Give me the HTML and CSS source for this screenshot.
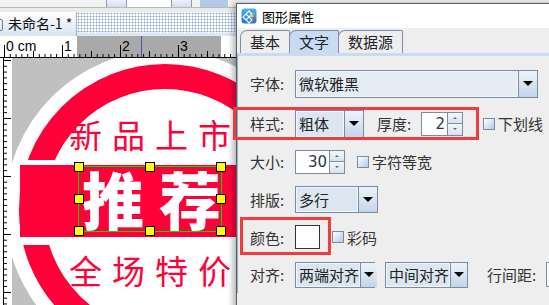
FILE: index.html
```html
<!DOCTYPE html>
<html>
<head>
<meta charset="utf-8">
<link rel="stylesheet" href="styles.css">
</head>
<body>
<div class="app">
  <div class="toolbar">
    <div class="tb-blank"></div>
    <div class="tb-btn"></div>
    <div class="tb-field"></div>
    <div class="tb-btn"></div>
    <div class="tb-gap"></div>
    <div class="tb-blue"></div>
  </div>
  <div class="topgap"></div>
  <div class="doctabs">
    <div class="doctab"><span class="doctab-icon"></span>未命名-1 *</div>
    <div class="dots"></div>
  </div>
  <div class="hruler">
    <span class="rl" style="left:6px">0 cm</span>
    <span class="rl" style="left:64px">1</span>
    <span class="rl" style="left:122px">2</span>
    <span class="rl" style="left:180px">3</span>
  </div>
  <div class="work">
    <div class="vruler"></div>
    <div class="canvas">
      <div class="disc"><div class="ring"></div></div>
      <div class="band"></div>
      <div class="t1">新品上市</div>
      <div class="t2">推荐</div>
      <div class="t3">全场特价</div>
      <div class="sel">
        <i class="h tl"></i><i class="h tc"></i><i class="h tr"></i>
        <i class="h ml"></i><i class="h mr"></i>
        <i class="h bl"></i><i class="h bc"></i><i class="h br"></i>
      </div>
    </div>
  </div>
</div>

<div class="dialog">
  <div class="titlebar">
    <svg class="appicon" width="16" height="16" viewBox="0 0 16 16">
      <defs>
        <linearGradient id="ig" x1="0" y1="0" x2="0" y2="1">
          <stop offset="0" stop-color="#4fb0f5"/>
          <stop offset="1" stop-color="#1f74d6"/>
        </linearGradient>
      </defs>
      <rect x="0.5" y="0.5" width="15" height="15" rx="3" fill="url(#ig)"/>
      <path d="M8 3 L11 6 L8 9 L5 6 Z M5 6 L8 9 L5 12 L2 9 Z M8 9 L11 12 L8 15 L5 12 Z" fill="none" stroke="#fff" stroke-width="1.1"/>
      <path d="M11 6 L13 8 L11 10 L9 8 Z" fill="#f3c233"/>
      <rect x="11.5" y="9.5" width="2.5" height="2.5" fill="#e04b3a"/>
      <rect x="12" y="5" width="2" height="2" fill="#5fc24a"/>
    </svg>
    <span class="title">图形属性</span>
  </div>
  <div class="tabs">
    <div class="tab">基本</div>
    <div class="tab on">文字</div>
    <div class="tab">数据源</div>
  </div>
  <div class="panel">
    <div class="form">
      <div class="row">
        <span class="lbl">字体:</span>
        <div class="combo w-font"><span class="f plain">微软雅黑</span><span class="b"></span></div>
      </div>
      <div class="row">
        <span class="lbl">样式:</span>
        <div class="combo w-style"><span class="f">粗体</span><span class="b"></span></div>
        <span class="lbl lbl-thick">厚度:</span>
        <div class="spin w-thick"><span class="v">2</span><span class="arrows"><i class="up"></i><i class="dn"></i></span></div>
        <span class="cb cb-under"></span><span class="cbl">下划线</span>
      </div>
      <div class="row">
        <span class="lbl">大小:</span>
        <div class="spin w-size"><span class="v">30</span><span class="arrows"><i class="up"></i><i class="dn"></i></span></div>
        <span class="cb cb-mono"></span><span class="cbl">字符等宽</span>
      </div>
      <div class="row">
        <span class="lbl">排版:</span>
        <div class="combo w-layout"><span class="f">多行</span><span class="b"></span></div>
      </div>
      <div class="row">
        <span class="lbl">颜色:</span>
        <span class="swatch"></span>
        <span class="cb cb-color"></span><span class="cbl">彩码</span>
      </div>
      <div class="row">
        <span class="lbl">对齐:</span>
        <div class="combo w-al1"><span class="f">两端对齐</span><span class="b"></span></div>
        <div class="combo w-al2"><span class="f">中间对齐</span><span class="b"></span></div>
        <span class="lbl lbl-line">行间距:</span>
        <span class="stub"></span>
      </div>
    </div>
  </div>
</div>

<div class="hl hl1"></div>
<div class="hl hl2"></div>
</body>
</html>
```

FILE: styles.css
```css
html, body {
  margin: 0;
  padding: 0;
}
body {
  width: 549px;
  height: 305px;
  overflow: hidden;
  position: relative;
  background: #eeeeee;
  font-family: "Noto Sans CJK SC", "Liberation Sans", sans-serif;
}

/* ---------- main window ---------- */
.app {
  display: flex;
  flex-direction: column;
  height: 305px;
}
.toolbar {
  height: 7px;
  display: flex;
  background: #f3f3f3;
  border-bottom: 1px solid #b9b9b9;
  flex: none;
}
.tb-blank { width: 106px; }
.tb-btn {
  width: 19px;
  background: linear-gradient(#eef2f7, #d3deea);
  border-left: 1px solid #8b9bb1;
  border-right: 1px solid #8b9bb1;
}
.tb-field { width: 44px; background: #fff; }
.tb-gap { width: 8px; }
.tb-blue { width: 28px; background: #b3cae6; }
.topgap { height: 4px; background: #ebebeb; flex: none; }

.doctabs {
  height: 24px;
  display: flex;
  background: #fff;
  flex: none;
}
.doctab {
  width: 77px;
  box-sizing: border-box;
  background: linear-gradient(#ffffff, #d8e3f0);
  border-right: 1px solid #9fb2c8;
  font-size: 14px;
  line-height: 23px;
  padding-left: 8px;
  color: #111;
  position: relative;
  white-space: nowrap;
}
.doctab-icon {
  position: absolute;
  left: -8px;
  top: 7px;
  width: 9px;
  height: 10px;
  border: 1px solid #6a7a90;
  border-radius: 2px;
}
.dots {
  flex: 1;
  background: radial-gradient(circle, #7f9fd6 0.75px, transparent 1.15px) 0 0 / 3px 3px, #ffffff;
  border-bottom: 3px solid #dfe6ef;
}

.hruler {
  height: 21px;
  flex: none;
  position: relative;
  border-bottom: 1px solid #000;
  background:
    linear-gradient(#4a56b0, #4a56b0) 141px 0 / 1px 100% no-repeat,
    linear-gradient(to right, #000 1px, transparent 1px) 4px 100% / 58px 12px repeat-x,
    linear-gradient(to right, #000 1px, transparent 1px) 33px 100% / 58px 6px repeat-x,
    linear-gradient(to right, #000 1px, transparent 1px) 4px 100% / 5.8px 3px repeat-x,
    linear-gradient(#a9a9a9, #a9a9a9) 77px 0 / 144px 100% no-repeat,
    #ffffff;
}
.rl {
  position: absolute;
  top: 2px;
  font-family: "Liberation Sans", sans-serif;
  font-size: 14px;
  line-height: 16px;
  color: #000;
}

.work {
  flex: 1;
  display: flex;
  min-height: 0;
}
.vruler {
  width: 12px;
  flex: none;
  background:
    linear-gradient(#000, #000) 3px 0 / 1px 100% no-repeat,
    linear-gradient(#000 1px, transparent 1px) 3px 2px / 8px 58px repeat-y,
    linear-gradient(#000 1px, transparent 1px) 3px 2px / 4px 5.8px repeat-y,
    #ffffff;
}
.canvas {
  flex: 1;
  position: relative;
  overflow: hidden;
  background: #c0c0c0;
}
.disc {
  position: absolute;
  left: -7px;
  top: -8px;
  width: 320px;
  height: 320px;
  border-radius: 50%;
  background: #ffffff;
}
.ring {
  position: absolute;
  inset: 14px;
  border-radius: 50%;
  border: 25px solid #ff0038;
}
.band {
  position: absolute;
  left: 8px;
  top: 102px;
  width: 320px;
  height: 72px;
  background: #ff0038;
  border-top: 5px solid #fff;
  border-bottom: 8px solid #fff;
}
.t1, .t3 {
  position: absolute;
  left: 57px;
  color: #ff0038;
  font-size: 33px;
  line-height: 1;
  letter-spacing: 10px;
  white-space: nowrap;
}
.t1 { top: 60px; }
.t3 { top: 196px; }
.t2 {
  position: absolute;
  left: 70px;
  top: 109px;
  color: #ffffff;
  font-size: 62px;
  font-weight: 900;
  line-height: 1;
  letter-spacing: 15px;
  white-space: nowrap;
}
.sel {
  position: absolute;
  left: 66px;
  top: 108px;
  width: 144px;
  height: 66px;
  box-sizing: border-box;
  border: 1px solid #00e000;
}
.h {
  position: absolute;
  width: 10px;
  height: 10px;
  box-sizing: border-box;
  background: #ffff00;
  border: 1px solid #000;
  margin: -5px 0 0 -5px;
}
.tl { left: 0; top: 0; }
.tc { left: 50%; top: 0; }
.tr { left: 100%; top: 0; }
.ml { left: 0; top: 50%; }
.mr { left: 100%; top: 50%; }
.bl { left: 0; top: 100%; }
.bc { left: 50%; top: 100%; }
.br { left: 100%; top: 100%; }

/* ---------- dialog ---------- */
.dialog {
  position: absolute;
  left: 236px;
  top: 3px;
  width: 330px;
  height: 310px;
  box-sizing: border-box;
  border-left: 1px solid #56606c;
  border-top: 1px solid #56606c;
  background: #eeeeee;
  box-shadow: -3px 0 6px rgba(0, 0, 0, 0.3);
}
.titlebar {
  height: 24px;
  background: #ffffff;
  display: flex;
  align-items: center;
  padding-left: 4px;
}
.appicon { flex: none; }
.title {
  margin-left: 5px;
  font-size: 13px;
  color: #000;
}
.tabs {
  display: flex;
  align-items: flex-end;
  height: 23px;
  margin-top: 2px;
  padding-left: 3px;
}
.tab {
  height: 23px;
  box-sizing: border-box;
  border: 1px solid #7d8fa8;
  border-bottom: none;
  border-radius: 7px 2px 0 0;
  background: #eeeeee;
  font-size: 15px;
  line-height: 22px;
  padding: 0 9px;
  margin-right: -1px;
  color: #222;
}
.tab.on { background: #c8dbf0; }
.panel {
  border-top: 3px solid #c8dbf0;
  border-left: 1px solid #9aaac0;
  padding: 7px 0 0 12px;
}
.form {
  display: grid;
  grid-template-rows: 41px 39px 37px 38px 38px 37px;
}
.row {
  display: flex;
  align-items: center;
  white-space: nowrap;
}
.lbl {
  width: 45px;
  flex: none;
  font-size: 15px;
  color: #333;
}
.lbl-thick { width: 44px; margin-left: 13px; }
.lbl-line { width: 59px; margin-left: 19px; }

.combo {
  display: flex;
  flex: none;
  height: 28px;
  box-sizing: border-box;
  border: 1px solid #7a8ca4;
}
.combo .f {
  flex: 1;
  background: #dce6f1;
  border: 1px solid #f4f7fb;
  font-size: 15px;
  line-height: 24px;
  padding-left: 2px;
  color: #222;
}
.combo .f.plain { background: #e6ecf3; }
.combo .b {
  width: 18px;
  flex: none;
  border-left: 1px solid #7a8ca4;
  background: linear-gradient(#eef3f9, #c4d5e9);
  display: flex;
  align-items: center;
  justify-content: center;
}
.combo .b::after {
  content: "";
  border-left: 5px solid transparent;
  border-right: 5px solid transparent;
  border-top: 5px solid #000;
}
.w-font { width: 243px; }
.w-style { width: 69px; }
.w-layout { width: 83px; height: 27px; }
.w-al1 { width: 80px; height: 26px; }
.w-al2 { width: 83px; height: 26px; margin-left: 10px; }
.w-al1 .b, .w-al2 .b { width: 16px; }
.w-al1 .f, .w-al2 .f { line-height: 22px; }

.spin {
  display: flex;
  flex: none;
  box-sizing: border-box;
  border: 1px solid #7a8ca4;
  background: #ffffff;
}
.spin .v {
  flex: 1;
  text-align: right;
  padding-right: 2px;
  font-family: "DejaVu Sans", sans-serif;
  font-size: 15px;
  color: #2a3550;
  align-self: center;
}
.spin .arrows {
  width: 14px;
  flex: none;
  display: flex;
  flex-direction: column;
  border-left: 1px solid #7a8ca4;
}
.spin .arrows i {
  flex: 1;
  background: linear-gradient(#f4f7fb, #d7e2ef);
  display: flex;
  align-items: center;
  justify-content: center;
}
.spin .arrows .up { border-bottom: 1px solid #7a8ca4; }
.spin .arrows .up::after {
  content: "";
  border-left: 2px solid transparent;
  border-right: 2px solid transparent;
  border-bottom: 2px solid #666;
}
.spin .arrows .dn::after {
  content: "";
  border-left: 2px solid transparent;
  border-right: 2px solid transparent;
  border-top: 2px solid #666;
}
.w-thick { width: 42px; height: 24px; }
.w-size { width: 50px; height: 24px; }

.cb {
  width: 12px;
  height: 12px;
  flex: none;
  box-sizing: border-box;
  border: 1px solid #7a8ca4;
  background: linear-gradient(135deg, #ffffff, #b7cae3);
}
.cb-under { margin-left: 20px; }
.cb-mono { margin-left: 12px; }
.cb-color { margin-left: 12px; }
.cbl {
  margin-left: 3px;
  font-size: 15px;
  color: #333;
}
.swatch {
  width: 25px;
  height: 24px;
  flex: none;
  box-sizing: border-box;
  border: 1px solid #333;
  background: #ffffff;
}
.stub {
  width: 20px;
  height: 25px;
  flex: none;
  box-sizing: border-box;
  border: 1px solid #7a8ca4;
  background: #fff;
}

/* ---------- highlight overlays ---------- */
.hl {
  position: absolute;
  box-sizing: border-box;
  border: 3px solid #f03c3c;
}
.hl1 { left: 233px; top: 107px; width: 246px; height: 33px; }
.hl2 { left: 240px; top: 217px; width: 91px; height: 38px; }
```
